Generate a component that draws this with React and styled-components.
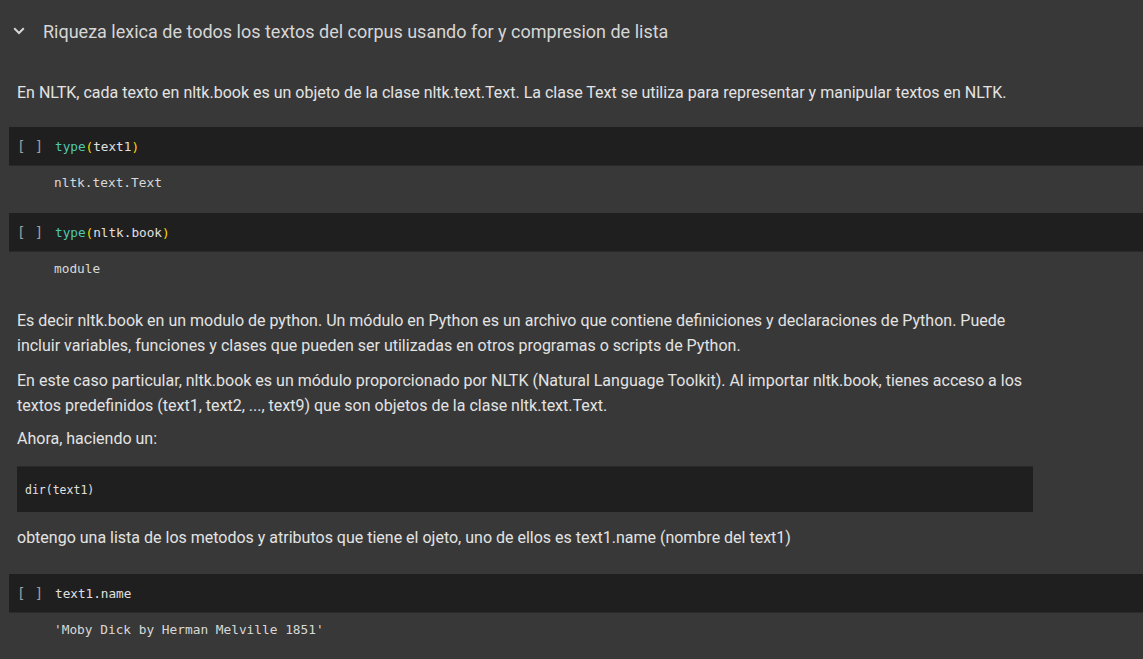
import React from "react";
import styled, { createGlobalStyle } from "styled-components";

const Global = createGlobalStyle`
  html, body { margin: 0; padding: 0; background: #383838; }
  body { font-family: Roboto, "Noto Sans", sans-serif; color: #e3e3e3; }
  * { box-sizing: border-box; }
`;

const Page = styled.div`
  width: 1143px;
  height: 659px;
  overflow: hidden;
  background: #383838;
`;

const Heading = styled.div`
  height: 62px;
  display: flex;
  align-items: center;
  padding-left: 12px;
  gap: 17px;
  font-size: 18px;
  color: #d6d6d6;
`;

const Markdown = styled.div`
  padding: ${(p) => p.$pad || "0"};
  padding-left: 17px;
  width: 1033px;
`;

const P = styled.p`
  margin: ${(p) => p.$m || "0"};
  font-size: 16px;
  line-height: 25px;
  color: #e3e3e3;
`;

const Cell = styled.div`
  margin: ${(p) => p.$m || "0"} 0 0 9px;
  height: 39px;
  background: #1f1f1f;
  border-bottom: 1px solid #2a2a2a;
  display: flex;
  align-items: center;
  font-family: "DejaVu Sans Mono", "Liberation Mono", monospace;
  font-size: 12.7px;
`;

const Brackets = styled.span`
  width: 46px;
  padding-left: 8px;
  color: #a0a0a0;
  font-size: 14px;
  letter-spacing: 0.5px;
`;

const Code = styled.span`
  color: #e0e0e0;
  white-space: pre;
`;

const Kw = styled.span`
  color: #4ec9b0;
`;

const Paren = styled.span`
  color: #ffd700;
`;

const Output = styled.div`
  padding: 8px 0 ${(p) => p.$pb || "21px"} 54px;
  font-family: "DejaVu Sans Mono", "Liberation Mono", monospace;
  font-size: 12.8px;
  line-height: 18px;
  color: #d8d8d8;
  white-space: pre;
`;

const Pre = styled.div`
  margin: 15px 0 13px;
  height: 46px;
  width: 1016px;
  background: #1f1f1f;
  border-top: 1px solid #2a2a2a;
  display: flex;
  align-items: center;
  padding-left: 8px;
  font-family: "DejaVu Sans Mono", "Liberation Mono", monospace;
  font-size: 11.5px;
  color: #e0e0e0;
`;

const Chevron = () => (
  <svg width="14" height="14" viewBox="0 0 24 24" fill="none">
    <path d="M5 8.5l7 7 7-7" stroke="#d6d6d6" strokeWidth="3.4" strokeLinecap="square" />
  </svg>
);

export default function App() {
  return (
    <Page>
      <Global />
      <Heading>
        <Chevron />
        <span>Riqueza lexica de todos los textos del corpus usando for y compresion de lista</span>
      </Heading>
      <Markdown $pad="18px 0 0">
        <P>
          En NLTK, cada texto en nltk.book es un objeto de la clase nltk.text.Text. La clase Text se utiliza para
          representar y manipular textos en NLTK.
        </P>
      </Markdown>
      <Cell $m="22px">
        <Brackets>[ ]</Brackets>
        <Code>
          <Kw>type</Kw>
          <Paren>(</Paren>text1<Paren>)</Paren>
        </Code>
      </Cell>
      <Output>nltk.text.Text</Output>
      <Cell>
        <Brackets>[ ]</Brackets>
        <Code>
          <Kw>type</Kw>
          <Paren>(</Paren>nltk.book<Paren>)</Paren>
        </Code>
      </Cell>
      <Output $pb="8px">module</Output>
      <Markdown $pad="22px 0 0">
        <P $m="0 0 10px">
          Es decir nltk.book en un modulo de python. Un módulo en Python es un archivo que contiene definiciones y
          declaraciones de Python. Puede incluir variables, funciones y clases que pueden ser utilizadas en otros
          programas o scripts de Python.
        </P>
        <P $m="0 0 8px">
          En este caso particular, nltk.book es un módulo proporcionado por NLTK (Natural Language Toolkit). Al
          importar nltk.book, tienes acceso a los textos predefinidos (text1, text2, ..., text9) que son objetos de la
          clase nltk.text.Text.
        </P>
        <P>Ahora, haciendo un:</P>
        <Pre>dir(text1)</Pre>
        <P>
          obtengo una lista de los metodos y atributos que tiene el ojeto, uno de ellos es text1.name (nombre del
          text1)
        </P>
      </Markdown>
      <Cell $m="24px">
        <Brackets>[ ]</Brackets>
        <Code>text1.name</Code>
      </Cell>
      <Output>'Moby Dick by Herman Melville 1851'</Output>
    </Page>
  );
}
